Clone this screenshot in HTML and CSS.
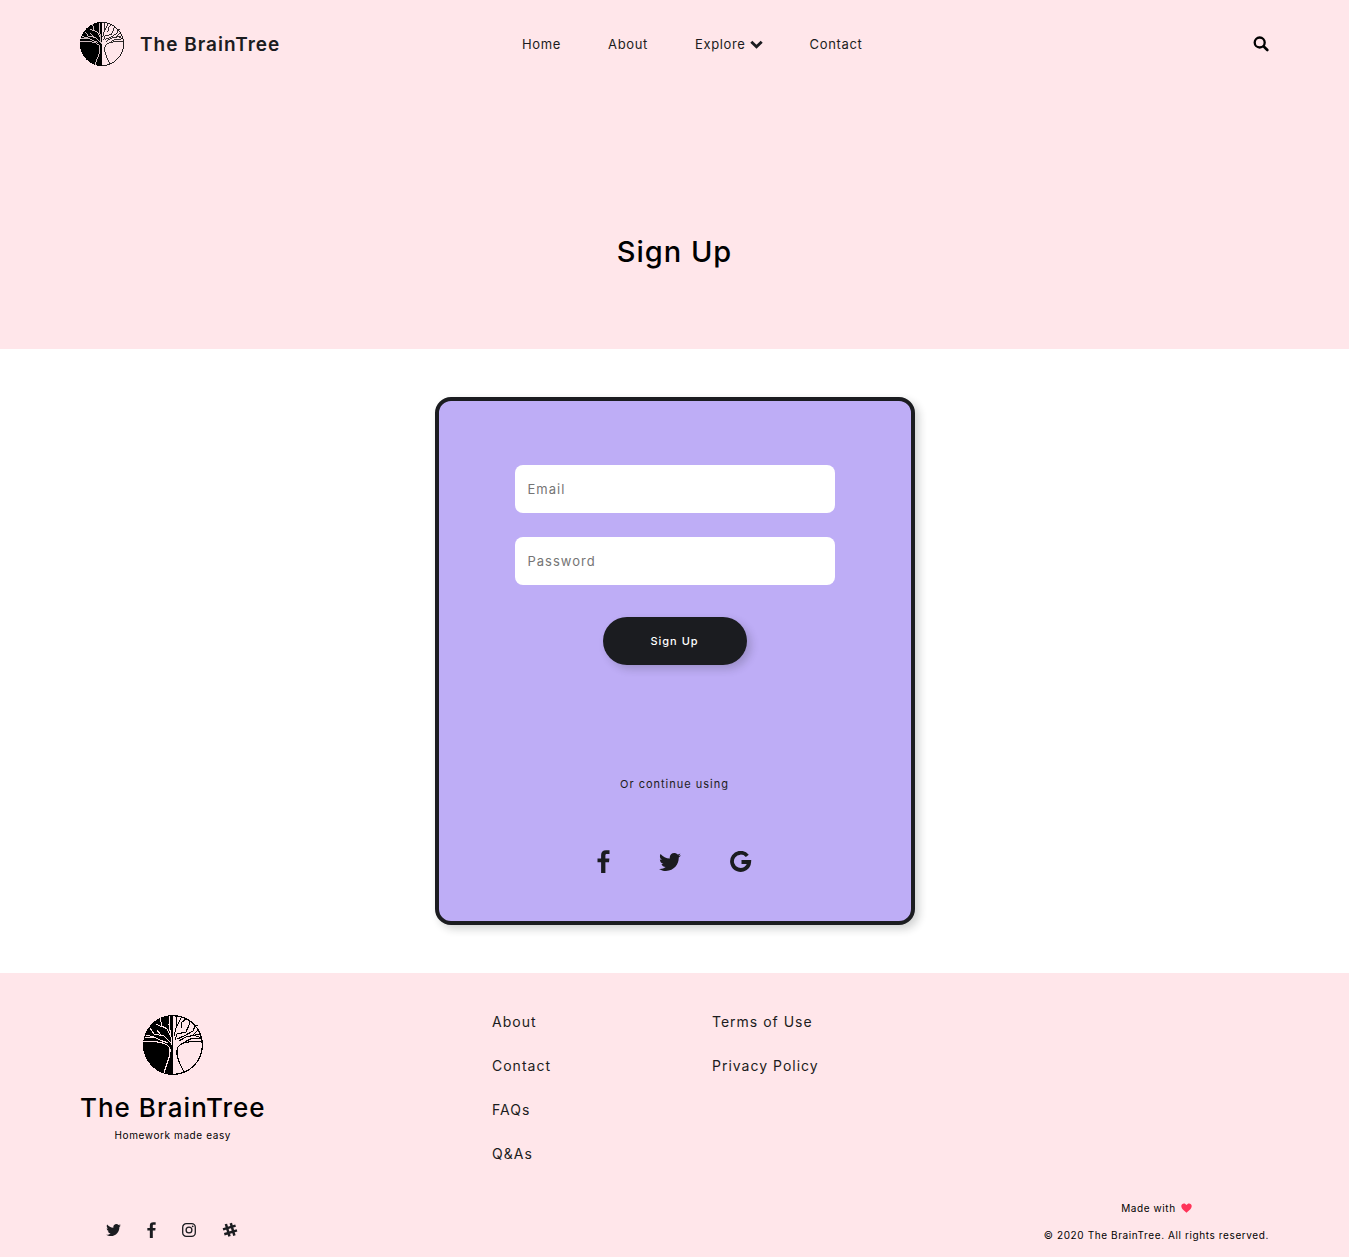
FILE: index.html
```html
<!DOCTYPE html>
<html lang="en">
<head>
<meta charset="utf-8">
<meta name="viewport" content="width=device-width, initial-scale=1">
<title>Sign Up | The BrainTree</title>
<link rel="stylesheet" href="styles.css">
</head>
<body>
<svg class="sprite" aria-hidden="true">
  <symbol id="tree" viewBox="0 0 60 60">
    <path fill="#000" d="M30 0A30 30 0 0 0 30 60Z"/>
    <circle cx="30" cy="30" r="29.4" fill="none" stroke="#000" stroke-width="1.2"/>
    <g fill="none" stroke="#ffe6ea" stroke-width="1.1">
      <path d="M0 26.500C12 26 25 27 27 34C28 42 23 49 21 58"/>
      <path d="M27 1L26 10L28 21M17 3L19 11L24 14L28 22L29 30M13 9L19 12M7 13L11 19L21 21L28 28M2 23L11 22L17 25L25 28M3 20L11 22M14 15L18 20"/>
    </g>
    <g fill="none" stroke="#000" stroke-width="1.1">
      <path d="M59 27C48 26 35 27 34 35C33 42 37 49 41 57"/>
      <path d="M31 21L33 13L38 3M33 1L34 11M38 13L39 7L43 4M32 25L34 19L43 17L46 10L47 5M34 24L41 21L50 16L52 11L55 10M36 26L43 22L57 19M49 21L56 14M53 21L59 23M42 27L47 24L58 23"/>
    </g>
  </symbol>
  <symbol id="facebook" viewBox="0 0 13 23">
    <path d="M12.500 4H9.800C8.700 4 8.400 4.500 8.400 5.500V8.500H12.400L12 12.200H8.400V23H4.100V12.200H.5V8.500H4.100V5C4.100 2 5.900.3 9 .3H12.500Z"/>
  </symbol>
  <symbol id="twitter" viewBox="0 48 512 416">
    <path d="M459.370 151.716c.325 4.548.325 9.097.325 13.645 0 138.720-105.583 298.558-298.558 298.558-59.452 0-114.680-17.219-161.137-47.106 8.447.974 16.568 1.299 25.340 1.299 49.055 0 94.213-16.568 130.274-44.832-46.132-.975-84.792-31.188-98.112-72.772 6.498.974 12.995 1.624 19.818 1.624 9.421 0 18.843-1.300 27.614-3.573-48.081-9.747-84.143-51.980-84.143-102.985v-1.299c13.969 7.797 30.214 12.670 47.431 13.319-28.264-18.843-46.781-51.005-46.781-87.391 0-19.492 5.197-37.360 14.294-52.954 51.655 63.675 129.300 105.258 216.365 109.807-1.624-7.797-2.599-15.918-2.599-24.040 0-57.828 46.782-104.934 104.934-104.934 30.213 0 57.502 12.670 76.670 33.137 23.715-4.548 46.456-13.320 66.599-25.340-7.798 24.366-24.366 44.833-46.132 57.827 21.117-2.273 41.584-8.122 60.426-16.243-14.292 20.791-32.161 39.308-52.628 54.253z"/>
  </symbol>
  <symbol id="google" viewBox="0 0 22 22">
    <path d="M17.300 4.900A8.600 8.600 0 1 0 19.200 11H11.500" fill="none" stroke="currentColor" stroke-width="3.800"/>
  </symbol>
  <symbol id="instagram" viewBox="0 0 14 14">
    <rect x=".7" y=".7" width="12.600" height="12.600" rx="3.600" fill="none" stroke="currentColor" stroke-width="1.300"/>
    <circle cx="7" cy="7" r="2.900" fill="none" stroke="currentColor" stroke-width="1.300"/>
    <circle cx="10.700" cy="3.300" r=".9"/>
  </symbol>
  <symbol id="slack" viewBox="0 0 16 16">
    <path d="M3.900 2L7.500 14.400M8.800 1.200L12.400 13.600M1 7.400L13.600 3.600M2.300 12.200L15 8.400" fill="none" stroke="currentColor" stroke-width="2.500"/>
  </symbol>
</svg>

<header class="header">
  <div class="container nav-bar">
    <a class="brand" href="#"><svg class="brand-mark"><use href="#tree"/></svg><span>The BrainTree</span></a>
    <nav class="nav" aria-label="Main">
      <a href="#">Home</a>
      <a href="#">About</a>
      <a class="explore" href="#">Explore <svg class="chevron" viewBox="0 0 13 9"><path d="M1.300 1.700L6.500 6.700L11.700 1.700" fill="none" stroke="currentColor" stroke-width="2.900"/></svg></a>
      <a href="#">Contact</a>
    </nav>
    <button class="search" type="button" aria-label="Search"><svg viewBox="0 0 16 16"><circle cx="6.700" cy="6.500" r="5" fill="none" stroke="currentColor" stroke-width="2.300"/><path d="M10.500 10.300L14.300 14" stroke="currentColor" stroke-width="2.600" stroke-linecap="round"/></svg></button>
  </div>
  <h1 class="title">Sign Up</h1>
</header>

<main class="main">
  <form class="card">
    <input class="field" type="email" placeholder="Email" aria-label="Email">
    <input class="field" type="password" placeholder="Password" aria-label="Password">
    <button class="submit" type="submit">Sign Up</button>
    <p class="alt">Or continue using</p>
    <div class="providers">
      <a href="#" aria-label="Facebook"><svg class="lg-facebook"><use href="#facebook"/></svg></a>
      <a href="#" aria-label="Twitter"><svg class="lg-twitter"><use href="#twitter"/></svg></a>
      <a href="#" aria-label="Google"><svg class="lg-google"><use href="#google"/></svg></a>
    </div>
  </form>
</main>

<footer class="footer">
  <div class="container">
    <div class="footer-top">
      <div class="footer-brand">
        <svg class="footer-mark"><use href="#tree"/></svg>
        <h2>The BrainTree</h2>
        <p>Homework made easy</p>
      </div>
      <nav class="links" aria-label="Site">
        <a href="#">About</a>
        <a href="#">Contact</a>
        <a href="#">FAQs</a>
        <a href="#">Q&amp;As</a>
      </nav>
      <nav class="links" aria-label="Legal">
        <a href="#">Terms of Use</a>
        <a href="#">Privacy Policy</a>
      </nav>
    </div>
    <div class="footer-bottom">
      <div class="social">
        <a href="#" aria-label="Twitter"><svg class="sm-twitter"><use href="#twitter"/></svg></a>
        <a href="#" aria-label="Facebook"><svg class="sm-facebook"><use href="#facebook"/></svg></a>
        <a href="#" aria-label="Instagram"><svg class="sm-instagram"><use href="#instagram"/></svg></a>
        <a href="#" aria-label="Slack"><svg class="sm-slack"><use href="#slack"/></svg></a>
      </div>
      <div class="legal">
        <p class="made">Made with <svg class="heart" viewBox="0 0 11 10"><path d="M5.500 9.700C3.500 8.100.3 5.900.3 3.100C.3.300 4 -.7 5.500 2C7-.7 10.700.3 10.700 3.100C10.700 5.900 7.500 8.100 5.500 9.700Z"/></svg></p>
        <p>© 2020 The BrainTree. All rights reserved.</p>
      </div>
    </div>
  </div>
</footer>
</body>
</html>
```
FILE: styles.css
```css
* { box-sizing: border-box; margin: 0; padding: 0; }

body {
  font-family: Inter, "Liberation Sans", sans-serif;
  font-size: 13px;
  letter-spacing: 1px;
  color: #1b1c20;
  background: #fff;
}

a { color: inherit; text-decoration: none; }
svg { display: block; fill: currentColor; }
button, input { font: inherit; letter-spacing: inherit; border: 0; }

.sprite { display: none; }
.container { padding: 0 80px; }

.header { background: #ffe6ea; padding-bottom: 77px; }
.nav-bar {
  display: grid;
  grid-template-columns: 442fr 731fr auto;
  align-items: center;
  height: 88px;
}
.brand {
  display: flex;
  align-items: center;
  gap: 16px;
  font-size: 19px;
  font-weight: 600;
}
.brand-mark { width: 44px; height: 46px; shape-rendering: crispEdges; }
.nav { display: flex; gap: 47px; letter-spacing: .05em; }
.explore { display: flex; align-items: center; gap: 4px; }
.chevron { width: 13px; height: 9px; }
.search { width: 16px; height: 16px; background: none; color: #000; cursor: pointer; }
.search svg { width: 16px; height: 16px; }
.title {
  padding-top: 144px;
  font-size: 29px;
  line-height: 40px;
  font-weight: 500;
  text-align: center;
  color: #000;
}

.main { display: flex; justify-content: center; padding: 48px 16px; }
.card {
  display: flex;
  flex-direction: column;
  align-items: center;
  width: 100%;
  max-width: 480px;
  padding: 64px 72px 48px;
  border: 4px solid #1b1c20;
  border-radius: 16px;
  background: #beadf6;
  box-shadow: 4px 4px 8px rgba(27, 28, 32, .2);
}
.field {
  width: 100%;
  max-width: 320px;
  height: 48px;
  margin-bottom: 24px;
  padding: 0 13px;
  border-radius: 8px;
  background: #fff;
}
.field::placeholder { color: #757575; }
.submit {
  width: 144px;
  height: 48px;
  margin-top: 8px;
  border-radius: 24px;
  background: #1b1c20;
  color: #fff;
  font-size: 11px;
  font-weight: 500;
  box-shadow: 4px 4px 8px rgba(27, 28, 32, .2);
  cursor: pointer;
}
.alt { margin-top: 111px; font-size: 11px; line-height: 16px; }
.providers {
  display: flex;
  align-items: center;
  gap: 49px;
  margin-top: 58px;
}
.lg-facebook { width: 13px; height: 23px; }
.lg-twitter { width: 22px; height: 18px; }
.lg-google { width: 22px; height: 22px; }

.footer { padding: 40px 0 14px; background: #ffe6ea; }
.footer-top { display: grid; grid-template-columns: 412fr 220fr 557fr; }
.footer-brand { justify-self: start; text-align: center; color: #000; }
.footer-mark { width: 60px; height: 60px; margin: 2px auto 16px; shape-rendering: crispEdges; }
.footer-brand h2 { font-size: 26px; line-height: 34px; font-weight: 500; }
.footer-brand p { margin-top: 2px; font-size: 10px; line-height: 16px; letter-spacing: .06em; }
.links { display: flex; flex-direction: column; align-items: flex-start; gap: 26px; font-size: 14px; line-height: 18px; }
.footer-bottom {
  display: flex;
  justify-content: space-between;
  align-items: flex-end;
  margin-top: 37px;
}
.social { display: flex; align-items: center; gap: 26px; padding: 0 26px; height: 26px; }
.sm-twitter { width: 15px; height: 12px; }
.sm-facebook { width: 9px; height: 16px; }
.sm-instagram { width: 14px; height: 14px; }
.sm-slack { width: 16px; height: 16px; }
.legal { font-size: 10px; line-height: 16px; letter-spacing: .06em; color: #000; }
.legal p + p { margin-top: 11px; }
.made { display: flex; justify-content: center; align-items: center; gap: 5px; }
.heart { width: 11px; height: 10px; color: #ff3358; }
```
